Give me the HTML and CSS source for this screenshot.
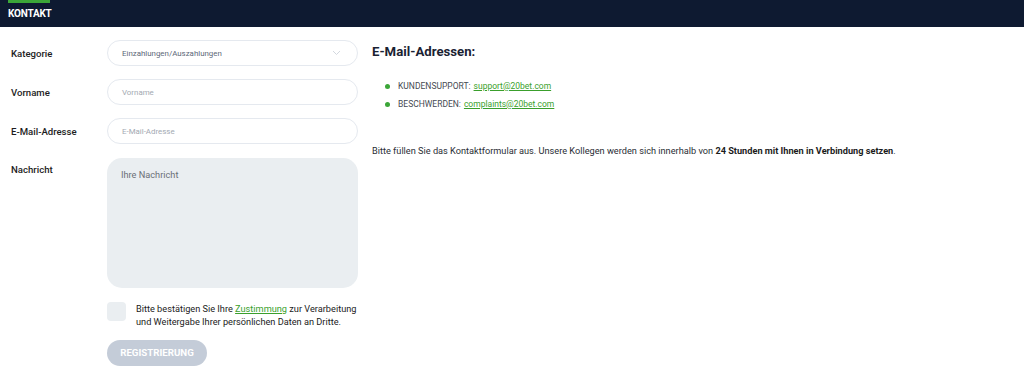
FILE: index.html
```html
<!DOCTYPE html>
<html lang="de">
<head>
<meta charset="utf-8">
<title>Kontakt</title>
<link rel="stylesheet" href="styles.css">
</head>
<body>
<header class="topbar">
  <div class="tab">KONTAKT</div>
</header>
<main class="content">
  <form class="form">
    <label class="label">Kategorie</label>
    <div class="field select">
      <span class="value">Einzahlungen/Auszahlungen</span>
      <svg class="chev" width="9" height="6" viewBox="0 0 9 6"><path d="M1 1l3.5 3.5L8 1" fill="none" stroke="#d3d8df" stroke-width="1"/></svg>
    </div>
    <label class="label">Vorname</label>
    <div class="field"><span class="ph">Vorname</span></div>
    <label class="label">E-Mail-Adresse</label>
    <div class="field"><span class="ph">E-Mail-Adresse</span></div>
    <label class="label label-top">Nachricht</label>
    <div class="textarea"><span class="ph2">Ihre Nachricht</span></div>
    <div></div>
    <div class="consent">
      <span class="checkbox"></span>
      <p class="consent-text">Bitte bestätigen Sie Ihre <a href="#" class="link">Zustimmung</a> zur Verarbeitung und Weitergabe Ihrer persönlichen Daten an Dritte.</p>
    </div>
    <div></div>
    <div><button type="button" class="btn">REGISTRIERUNG</button></div>
  </form>
  <section class="info">
    <h2 class="title">E-Mail-Adressen:</h2>
    <ul class="list">
      <li>KUNDENSUPPORT: <a href="#" class="link">support@20bet.com</a></li>
      <li>BESCHWERDEN: <a href="#" class="link">complaints@20bet.com</a></li>
    </ul>
    <p class="note">Bitte füllen Sie das Kontaktformular aus. Unsere Kollegen werden sich innerhalb von <b>24 Stunden mit Ihnen in Verbindung setzen</b>.</p>
  </section>
</main>
</body>
</html>
```
FILE: styles.css
```css
* { box-sizing: border-box; }
body {
  margin: 0;
  background: #fff;
  font-family: Roboto, "Liberation Sans", Arial, sans-serif;
  color: #1c1c1c;
}
.topbar {
  height: 27px;
  background: #0e1a31;
  padding-left: 8px;
}
.tab {
  width: 42px;
  height: 27px;
  border-top: 3px solid #3ba638;
  color: #fff;
  font-size: 10px;
  font-weight: 700;
  padding-top: 5px;
  letter-spacing: -0.2px;
}
.content {
  display: flex;
  gap: 14px;
  padding: 13px 0 0 10px;
}
.form {
  display: grid;
  grid-template-columns: 97px 251px;
  row-gap: 13px;
  align-items: center;
}
.label {
  font-size: 9.6px;
  font-weight: 500;
  color: #1d1d1d;
  padding-left: 1px;
}
.label-top { align-self: start; padding-top: 7px; }
.field {
  height: 26px;
  border: 1px solid #e5e9ef;
  border-radius: 13px;
  display: flex;
  align-items: center;
  padding: 0 14px;
  font-size: 7.9px;
}
.select { justify-content: space-between; }
.value { color: #5c6778; }
.ph { color: #a3a9b2; }
.chev { margin-right: 2px; }
.textarea {
  height: 130px;
  margin-top: 1px;
  background: #eaeef1;
  border-radius: 15px;
  padding: 11px 14px;
  font-size: 9.2px;
}
.ph2 { color: #6a7078; }
.consent {
  display: flex;
  align-items: flex-start;
  gap: 10px;
  margin-top: 1px;
}
.checkbox {
  flex: none;
  width: 19px;
  height: 19px;
  background: #eaeef1;
  border-radius: 4px;
}
.consent-text {
  margin: 0;
  font-size: 9.2px;
  line-height: 13px;
  color: #222;
  padding-top: 0;
}
.link {
  color: #3a9f2c;
  text-decoration: underline;
}
.btn {
  width: 100px;
  height: 26px;
  border: none;
  border-radius: 13px;
  background: #c4ccd8;
  color: #fff;
  font-family: Roboto, "Liberation Sans", Arial, sans-serif;
  font-weight: 700;
  font-size: 9.7px;
  padding: 0;
  margin-top: -2px;
}
.info { padding-top: 4px; }
.title {
  margin: 0;
  font-size: 13.2px;
  font-weight: 700;
  color: #1a2232;
}
.list {
  list-style: none;
  margin: 18px 0 0;
  padding: 0 0 0 13px;
  font-size: 8.5px;
  color: #454a52;
}
.list li {
  display: flex;
  align-items: center;
  height: 18px;
}
.list li::before {
  content: "";
  width: 5px;
  height: 5px;
  border-radius: 50%;
  background: #3ba638;
  margin-right: 8px;
}
.list li .link { margin-left: 3px; }
.note {
  margin: 32px 0 0;
  font-size: 9.2px;
  color: #2a2e35;
}
.note b { font-weight: 700; color: #1c1c1c; }
```
